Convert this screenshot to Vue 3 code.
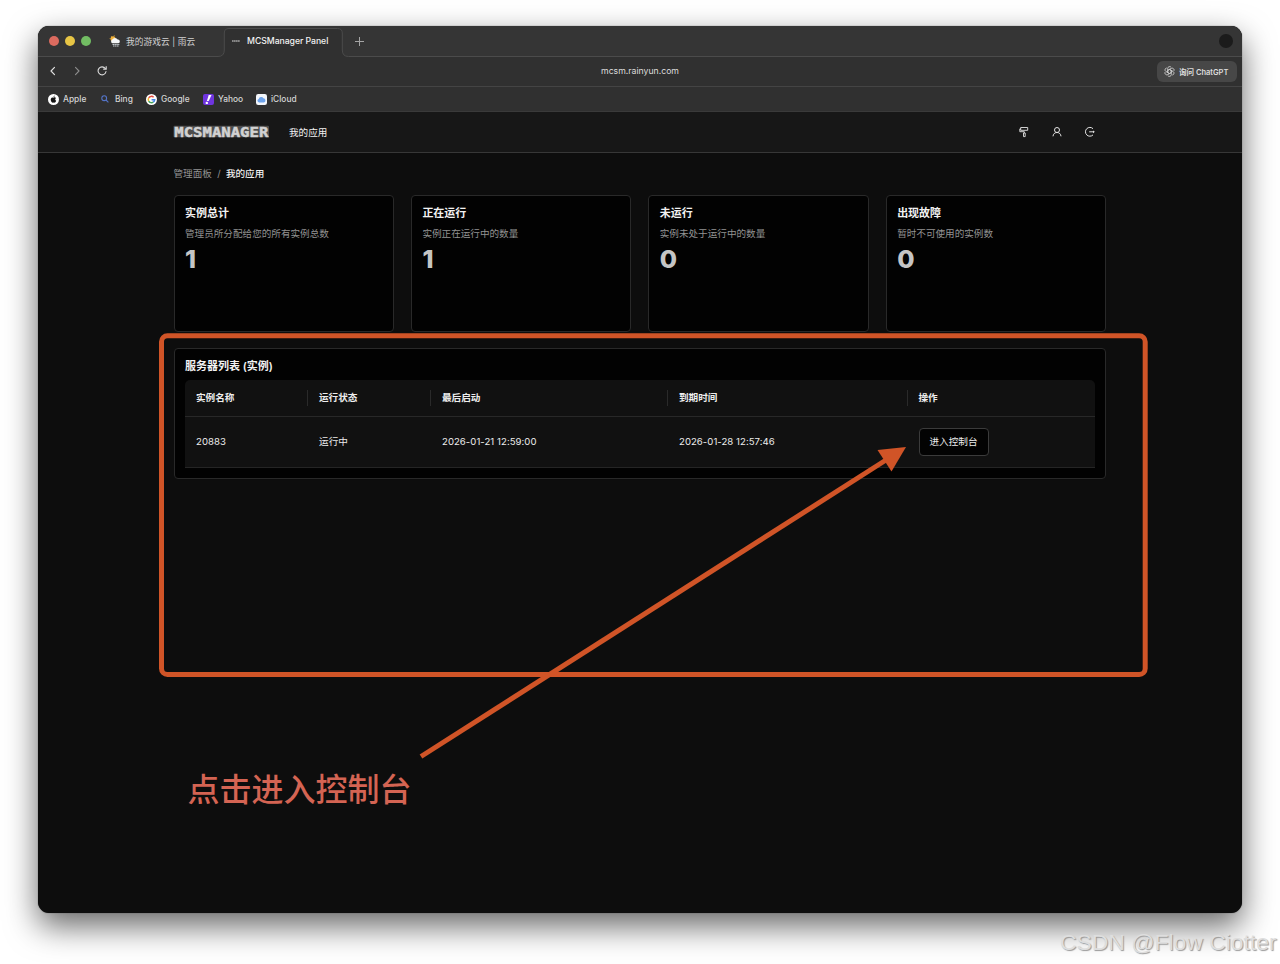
<script setup>
const cards = [
  { title: '实例总计', desc: '管理员所分配给您的所有实例总数', value: 1 },
  { title: '正在运行', desc: '实例正在运行中的数量', value: 1 },
  { title: '未运行', desc: '实例未处于运行中的数量', value: 0 },
  { title: '出现故障', desc: '暂时不可使用的实例数', value: 0 },
]
const columns = ['实例名称', '运行状态', '最后启动', '到期时间', '操作']
const row = ['20883', '运行中', '2026-01-21 12:59:00', '2026-01-28 12:57:46']
</script>

<template>
  <div class="desktop">
    <div class="window">
      <div class="tabs">
        <svg class="tab-outline" width="1204" height="31" viewBox="0 0 1204 31">
          <path d="M0 31V30.500H180Q186.300 30.500 186.300 24V7Q186.300 2.500 191 2.500H299.500Q304.300 2.500 304.300 7V24Q304.300 30.500 310.500 30.500H1204V31Z" fill="#303030" />
          <path d="M0 30.500H180Q186.300 30.500 186.300 24V7Q186.300 2.500 191 2.500H299.500Q304.300 2.500 304.300 7V24Q304.300 30.500 310.500 30.500H1204" fill="none" stroke="#4b4b4b" stroke-width="1" />
        </svg>
        <div class="lights"><i class="red"></i><i class="yellow"></i><i class="green"></i></div>
        <div class="tab first">
          <svg width="12" height="12" viewBox="0 0 12 12">
            <circle cx="4" cy="3.800" r="2.500" fill="#f0b13b" />
            <path d="M.7 3.500L1.600 3.700M2 1L2.700 1.800M5.300.4L5 1.400" stroke="#f0b13b" stroke-width=".8" />
            <path d="M3.400 8.300A2 2 0 0 1 3.300 4.600A3 3 0 0 1 8.700 4.600A1.900 1.900 0 0 1 9.500 8.300Z" fill="#f4f6f7" />
            <path d="M3.500 9.500H10.300M4 11H10" stroke="#c5cbcf" stroke-width="1" stroke-dasharray="1.500 .4" />
          </svg>
          <span>我的游戏云 | 雨云</span>
        </div>
        <div class="tab active">
          <svg width="8" height="4" viewBox="0 0 8 4"><path d="M0 2H8" stroke="#858585" stroke-width="1.800" stroke-dasharray="1.600 .3" /></svg>
          <span>MCSManager Panel</span>
        </div>
        <svg class="plus" width="9" height="9" viewBox="0 0 9 9"><path d="M4.500 0V9M0 4.500H9" stroke="#a5a5a5" stroke-width="1" /></svg>
        <i class="dot"></i>
      </div>

      <div class="toolbar">
        <div class="nav">
          <svg width="10" height="12" viewBox="0 0 10 12"><path d="M6.500 2.400L3 6L6.500 9.600" fill="none" stroke="#ddd" stroke-width="1.200" stroke-linecap="round" stroke-linejoin="round" /></svg>
          <svg width="10" height="12" viewBox="0 0 10 12"><path d="M3.500 2.400L7 6L3.500 9.600" fill="none" stroke="#8c8c8c" stroke-width="1.100" stroke-linecap="round" stroke-linejoin="round" /></svg>
          <svg width="12" height="12" viewBox="0 0 12 12"><path d="M9.300 3.500A4 4 0 1 0 10 6.500" fill="none" stroke="#ddd" stroke-width="1.100" stroke-linecap="round" /><path d="M7.200 4.100H10.200V1.200" fill="none" stroke="#ddd" stroke-width="1.100" /></svg>
        </div>
        <div class="url">mcsm.rainyun.com</div>
        <div class="ask">
          <svg width="11" height="11" viewBox="0 0 20 20" fill="none" stroke="#d4d4d4" stroke-width="1.500">
            <path v-for="n in 6" :key="n" :transform="`rotate(${n * 60} 10 10)`" d="M10 6.300L6.700 8.200V4.300A3.600 3.600 0 0 1 13 2.300M6.700 8.200V12" />
          </svg>
          <span>询问 ChatGPT</span>
        </div>
      </div>

      <div class="bookmarks">
        <div class="mark apple">
          <svg width="11" height="11" viewBox="0 0 11 11"><circle cx="5.500" cy="5.500" r="5.500" fill="#fff" /><path d="M5.500 3.700C6.500 3.100 7.400 3.300 8 4C6.900 4.800 7 6.300 8.200 6.800C7.600 8.500 6.700 8.900 5.600 8.500C4.400 9 3.700 8.400 3 7.100C2.200 5.200 3.200 2.900 5.500 3.700ZM5.500 3.200Q5.500 1.900 6.800 1.600Q6.800 2.900 5.500 3.200" fill="#151515" /></svg>
          <span>Apple</span>
        </div>
        <div class="mark bing">
          <svg width="8" height="8" viewBox="0 0 8 8"><circle cx="3.200" cy="3.200" r="2.400" fill="none" stroke="#5474c8" stroke-width="1.100" /><path d="M5 5L7.400 7.400" stroke="#5474c8" stroke-width="1.100" /></svg>
          <span>Bing</span>
        </div>
        <div class="mark google">
          <svg width="11" height="11" viewBox="0 0 11 11"><circle cx="5.500" cy="5.500" r="5.500" fill="#fff" /><g fill="none" stroke-width="1.500"><path d="M7.600 3.200A3.200 3.200 0 0 0 2.700 3.900" stroke="#e34c40" /><path d="M2.700 3.900A3.200 3.200 0 0 0 2.700 7.100" stroke="#edb82f" /><path d="M2.700 7.100A3.200 3.200 0 0 0 7.300 8.100" stroke="#45a35b" /><path d="M7.300 8.100A3.200 3.200 0 0 0 8.700 5.700H5.600" stroke="#4285e8" /></g></svg>
          <span>Google</span>
        </div>
        <div class="mark yahoo">
          <svg width="11" height="11" viewBox="0 0 11 11"><rect width="11" height="11" rx="2" fill="#6f35df" /><path d="M5.700 1H8.500L5.700 7H3.900Z" fill="#fff" /><circle cx="3.800" cy="8.900" r="1.200" fill="#fff" /></svg>
          <span>Yahoo</span>
        </div>
        <div class="mark icloud">
          <svg width="11" height="11" viewBox="0 0 11 11"><rect width="11" height="11" rx="2.200" fill="#f4f7fc" /><path d="M3 8.400A1.800 1.800 0 0 1 2.700 4.900A2.600 2.600 0 0 1 7.500 4.300A2.100 2.100 0 0 1 8 8.400Z" fill="#6ea4ec" /></svg>
          <span>iCloud</span>
        </div>
      </div>

      <header class="header">
        <svg class="logo" width="98" height="15" viewBox="0 0 98 15">
          <rect x="1.500" y="1.700" width="95.500" height="11.600" rx="1" fill="#4d4d4d" />
          <text x="2.300" y="12.600" textLength="94" lengthAdjust="spacingAndGlyphs">MCSMANAGER</text>
        </svg>
        <span class="menu">我的应用</span>
        <div class="actions">
          <svg width="12" height="12" viewBox="0 0 12 12" fill="none" stroke="#e4e4e4" stroke-width=".9"><path d="M2.700 1.500H9.700V4.300H2.700ZM2.700 2.900H1.800V5.700H6.300V7M5.500 7H7.200V10.600H5.500Z" /></svg>
          <svg width="12" height="12" viewBox="0 0 12 12" fill="none" stroke="#e4e4e4" stroke-width="1"><circle cx="6" cy="4" r="2.500" /><path d="M2 10.300C2.200 8 3.700 6.500 6 6.500C8.300 6.500 9.800 8 10 10.300" /></svg>
          <svg width="12" height="12" viewBox="0 0 12 12" fill="none" stroke="#e4e4e4" stroke-width="1"><path d="M9 2.700A4.400 4.400 0 1 0 9 8.900M5.200 5.800H10" /><path d="M9 4.400L10.800 5.800L9 7.200Z" fill="#e4e4e4" stroke="none" /></svg>
        </div>
      </header>

      <main class="content">
        <div class="crumb"><span>管理面板</span><span class="slash">/</span><b>我的应用</b></div>
        <div class="cards">
          <section v-for="c in cards" :key="c.title" class="card">
            <h3>{{ c.title }}</h3>
            <p>{{ c.desc }}</p>
            <strong>{{ c.value }}</strong>
          </section>
        </div>
        <section class="card list">
          <h3>服务器列表 (实例)</h3>
          <div class="table">
            <div class="tr head">
              <div v-for="c in columns" :key="c" class="cell">{{ c }}</div>
            </div>
            <div class="tr body">
              <div v-for="c in row" :key="c" class="cell">{{ c }}</div>
              <div class="cell"><button>进入控制台</button></div>
            </div>
          </div>
        </section>
      </main>
    </div>

    <svg class="overlay" width="1280" height="964" viewBox="0 0 1280 964">
      <rect x="161.500" y="335.700" width="983.700" height="338.800" rx="6" fill="none" stroke="#d05427" stroke-width="5" />
      <path d="M421 756.500L886 460" stroke="#d05427" stroke-width="5" />
      <path d="M906 447L877.500 450L891.500 471.500Z" fill="#d05427" />
    </svg>
    <div class="note">点击进入控制台</div>
    <div class="watermark">CSDN @Flow Ciotter</div>
  </div>
</template>

<style>
body { margin: 0; background: #fff; overflow: hidden; }
</style>

<style scoped>
* { box-sizing: border-box; }
svg { display: block; flex: none; }
.desktop { position: relative; width: 1280px; height: 964px; padding: 26px 38px; overflow: hidden; background: #fff; font-family: Inter, "Noto Sans CJK SC", sans-serif; font-size: 9.600px; color: #ececec; }
.window { width: 1204px; height: 887px; border-radius: 11px; overflow: hidden; background: #0d0d0d; box-shadow: 0 0 1px #333, 0 13px 32px rgba(0, 0, 0, .6); }
.tabs { position: relative; height: 31px; padding-bottom: 1px; display: flex; align-items: center; background: #353535; }
.tab-outline { position: absolute; left: 0; top: 0; }
.lights { position: relative; display: flex; gap: 6px; margin-left: 11px; }
.lights i { width: 10px; height: 10px; border-radius: 50%; }
.red { background: #dc6b5f; }
.yellow { background: #e7c545; }
.green { background: #72bd63; }
.tab { position: relative; display: flex; align-items: center; font-size: 8.700px; white-space: nowrap; }
.first { width: 114px; margin-left: 18px; gap: 5px; color: #d2d2d2; }
.first span { letter-spacing: .08px; }
.active { width: 103px; margin-left: 9px; gap: 7px; font-weight: 500; color: #f2f2f2; }
.active span { letter-spacing: -.05px; }
.plus { position: relative; margin-left: 20px; }
.dot { position: relative; width: 14px; height: 14px; border-radius: 50%; background: #1b1b1b; margin-left: auto; margin-right: 9px; }
.toolbar { height: 30px; padding-bottom: 1px; display: grid; grid-template-columns: 1fr auto 1fr; align-items: center; background: #303030; border-bottom: 1px solid #444; }
.nav { display: flex; gap: 14px; padding-left: 10px; align-items: center; }
.url { font-size: 8.700px; color: #ddd; }
.ask { justify-self: end; display: flex; align-items: center; gap: 4px; width: 80px; height: 21px; margin-right: 5px; padding-left: 7px; border-radius: 6px; background: #474747; color: #ddd; font-size: 7.500px; font-weight: 600; white-space: nowrap; }
.bookmarks { position: relative; height: 25px; display: flex; align-items: center; background: #303030; border-bottom: 1px solid #3a3a3a; font-size: 8.400px; font-weight: 500; color: #d5d5d5; padding-left: 10px; }
.mark { display: flex; align-items: center; gap: 4px; }
.apple { width: 53px; }
.bing { width: 45px; gap: 6px; }
.google { width: 57px; }
.yahoo { width: 53px; }
.header { height: 41px; padding: 0 146px 1px 134px; display: flex; align-items: center; background: #171717; border-bottom: 1px solid #373737; }
.logo text { font: bold 14.500px "DejaVu Sans Mono", monospace; fill: #d2d2d2; stroke: #d2d2d2; stroke-width: .5px; }
.menu { margin-left: 19px; color: #f2f2f2; }
.actions { display: flex; gap: 21px; margin-left: auto; }
.content { padding: 13px 136px 0 135.500px; }
.crumb { height: 14px; display: flex; align-items: center; color: #939393; }
.crumb b { font-weight: 500; color: #f0f0f0; }
.slash { width: 14px; text-align: center; }
.cards { display: grid; grid-template-columns: repeat(4, 1fr); gap: 17px; margin-top: 15px; }
.card { height: 137px; padding: 8.500px 10.500px 0; background: #020202; border: 1px solid #292929; border-radius: 4px; }
h3 { margin: 0; height: 16px; line-height: 16px; font-size: 11px; font-weight: 600; color: #f2f2f2; }
p { margin: 6px 0 0; height: 14px; line-height: 14px; color: #929292; }
strong { display: block; margin-top: 2px; line-height: 32px; font-size: 25px; font-weight: 800; color: #c5c5c5; }
.list { height: 130.500px; margin-top: 16px; padding: 9px 10.500px 0; }
.table { margin-top: 6px; height: 88px; background: #111; border-radius: 5px 5px 0 0; border-bottom: 1px solid #252525; }
.tr { display: grid; grid-template-columns: 123px 123px 237px 239.500px 1fr; align-items: center; }
.head { height: 37px; border-bottom: 1px solid #282828; font-weight: 600; color: #eee; }
.body { height: 50px; }
.body .cell { letter-spacing: .04px; }
.cell { height: 16px; line-height: 16px; padding-left: 11px; white-space: nowrap; display: flex; align-items: center; }
.head .cell:not(:last-child) { border-right: 1px solid #2a2a2a; }
button { width: 70px; height: 28px; flex: none; padding: 0; border: 1px solid #3b3b3b; border-radius: 4px; background: #030303; color: #ececec; font: inherit; }
.overlay { position: absolute; left: 0; top: 0; }
.note { position: absolute; left: 187.500px; top: 767px; line-height: 46px; font-size: 32px; font-weight: 500; color: #d46453; white-space: nowrap; }
.watermark { position: absolute; left: 1060px; top: 928px; line-height: 28px; font-family: "Liberation Sans", sans-serif; font-size: 22.900px; color: #dedede; text-shadow: 1px 1px 1px #999; white-space: nowrap; }
</style>
